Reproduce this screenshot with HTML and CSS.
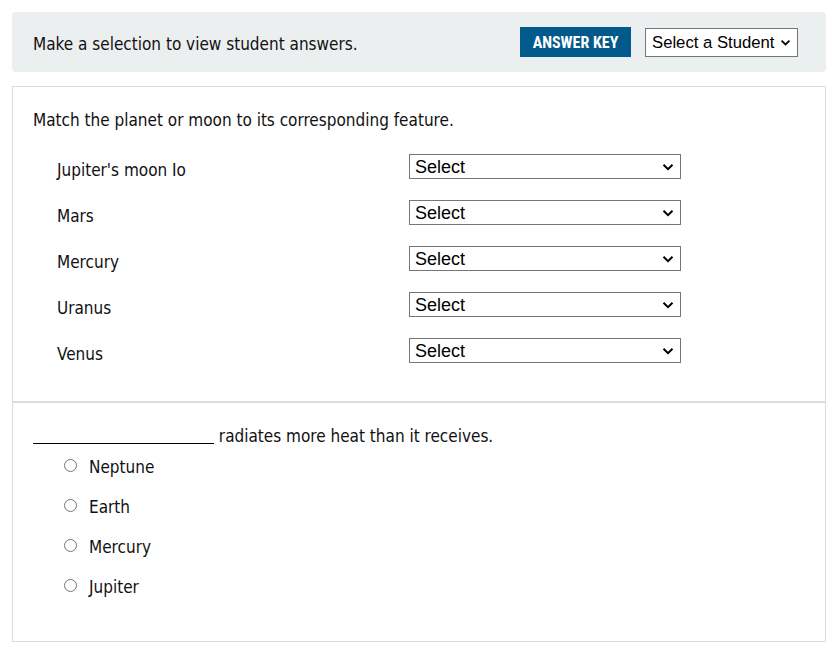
FILE: index.html
```html
<!DOCTYPE html>
<html lang="en">
<head>
<meta charset="utf-8">
<title>Student Answers</title>
<link rel="stylesheet" href="styles.css">
</head>
<body>
  <div class="toolbar">
    <span class="toolbar-text">Make a selection to view student answers.</span>
    <div class="toolbar-actions">
      <button class="key-btn" type="button">ANSWER KEY</button>
      <select class="student-select">
        <option>Select a Student</option>
      </select>
    </div>
  </div>

  <div class="panel">
    <section class="question q-match">
      <p class="prompt">Match the planet or moon to its corresponding feature.</p>
      <div class="match-grid">
        <span class="match-label">Jupiter's moon Io</span>
        <select class="match-select"><option>Select</option></select>
        <span class="match-label">Mars</span>
        <select class="match-select"><option>Select</option></select>
        <span class="match-label">Mercury</span>
        <select class="match-select"><option>Select</option></select>
        <span class="match-label">Uranus</span>
        <select class="match-select"><option>Select</option></select>
        <span class="match-label">Venus</span>
        <select class="match-select"><option>Select</option></select>
      </div>
    </section>
    <section class="question q-choice">
      <p class="prompt"><span class="blank"></span> radiates more heat than it receives.</p>
      <div class="options">
        <label class="option"><input type="radio" name="q2"><span>Neptune</span></label>
        <label class="option"><input type="radio" name="q2"><span>Earth</span></label>
        <label class="option"><input type="radio" name="q2"><span>Mercury</span></label>
        <label class="option"><input type="radio" name="q2"><span>Jupiter</span></label>
      </div>
    </section>
  </div>
</body>
</html>
```

FILE: styles.css
```css
* { box-sizing: border-box; }

body {
  margin: 0;
  padding: 12px;
  background: #fff;
  color: #111;
  font-family: Tahoma, "DejaVu Sans Condensed", "DejaVu Sans", sans-serif;
  font-size: 17px;
}

.toolbar {
  height: 60px;
  background: #eceff0;
  border-radius: 4px;
  display: flex;
  align-items: center;
  justify-content: space-between;
  padding: 0 28px 0 21px;
}

.toolbar-text {
  position: relative;
  top: 2px;
}

.toolbar-actions {
  display: flex;
  align-items: center;
  gap: 14px;
}

.key-btn {
  width: 111px;
  height: 30px;
  background: #015a8b;
  color: #fff;
  border: 0;
  padding: 0;
  font-family: "Liberation Sans Narrow", "Roboto Condensed", Roboto, sans-serif;
  font-weight: bold;
  font-size: 16px;
  cursor: pointer;
}

.student-select,
.match-select {
  appearance: none;
  -webkit-appearance: none;
  font-family: "Liberation Sans", Arial, sans-serif;
  color: #000;
  background-color: #fff;
  background-image: url("data:image/svg+xml,%3Csvg xmlns='http://www.w3.org/2000/svg' width='12' height='8' viewBox='0 0 12 8'%3E%3Cpath d='M1.5 1.8 6 6.2 10.5 1.8' fill='none' stroke='%23000' stroke-width='2'/%3E%3C/svg%3E");
  background-repeat: no-repeat;
  border: 1px solid #767676;
  border-radius: 0;
}

.student-select {
  width: 153px;
  height: 29px;
  font-size: 16.7px;
  padding: 1px 20px 0 6px;
  background-position: right 6px center;
  background-size: 11px 7px;
}

.panel {
  margin-top: 14px;
  border: 1px solid #dcdcdc;
}

.question {
  padding: 24px 20px 0 20px;
}

.prompt {
  margin: 0;
  line-height: 19px;
}

.q-match {
  padding-bottom: 38px;
  border-bottom: 2px solid #dcdcdc;
}

.match-grid {
  display: grid;
  grid-template-columns: 352px 272px;
  row-gap: 21px;
  padding-left: 24px;
  margin-top: 24px;
  align-items: center;
}

.match-label {
  position: relative;
  top: 3px;
}

.match-select {
  width: 272px;
  height: 25px;
  font-size: 18px;
  padding: 0 24px 0 5px;
  background-position: right 6px center;
  background-size: 12px 8px;
}

.q-choice {
  padding-bottom: 34px;
}

.blank {
  display: inline-block;
  width: 181px;
  border-bottom: 1px solid #000;
  vertical-align: baseline;
  position: relative;
  top: 2px;
}

.options {
  display: flex;
  flex-direction: column;
  padding-left: 31px;
  margin-top: 1px;
}

.option {
  display: flex;
  align-items: center;
  height: 40px;
}

.option input {
  width: 13px;
  height: 13px;
  margin: 0 12px 0 0;
  position: relative;
  top: -2px;
}
```
